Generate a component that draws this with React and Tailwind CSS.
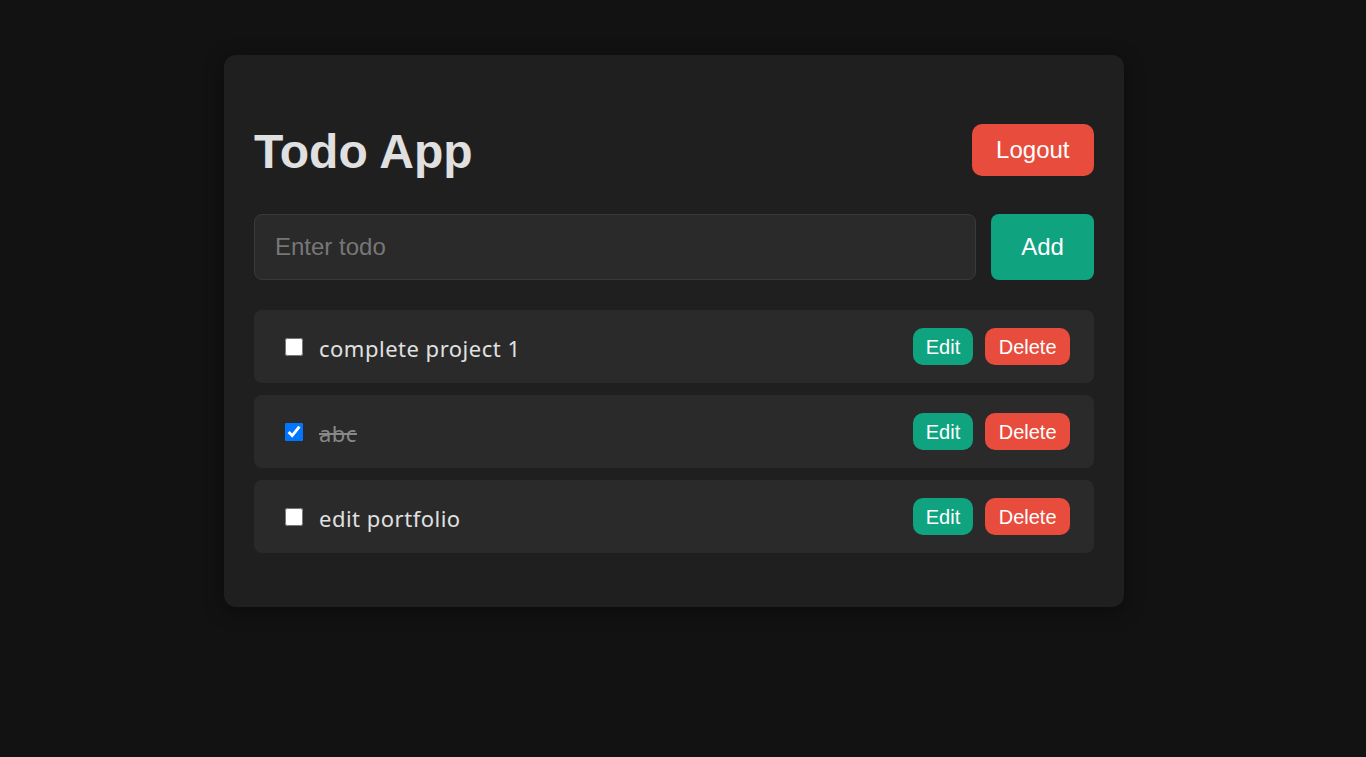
import React, { useState } from "react";

const initialTodos = [
  { id: 1, text: "complete project 1", done: false },
  { id: 2, text: "abc", done: true },
  { id: 3, text: "edit portfolio", done: false },
];

const App = () => {
  const [todos, setTodos] = useState(initialTodos);
  const [input, setInput] = useState("");

  const toggle = (id) =>
    setTodos((prev) => prev.map((t) => (t.id === id ? { ...t, done: !t.done } : t)));

  const addTodo = () => {
    if (!input.trim()) return;
    setTodos((prev) => [...prev, { id: Date.now(), text: input, done: false }]);
    setInput("");
  };

  const removeTodo = (id) => setTodos((prev) => prev.filter((t) => t.id !== id));

  return (
    <div className="min-h-screen w-full bg-[#121212] pt-[55px] font-['Liberation_Sans',Arial,sans-serif]">
      <div className="ml-[224px] w-[900px] rounded-xl bg-[#1f1f1f] px-[30px] pt-[69px] pb-[54px] shadow-[0_4px_20px_rgba(0,0,0,0.4)]">
        {/* Header */}
        <div className="flex items-center justify-between">
          <h1 className="mt-[3px] text-[48px] font-bold leading-none text-[#e0e0e0]">Todo App</h1>
          <button className="h-[52px] rounded-[10px] bg-[#e74c3c] px-[24.5px] text-[24px] text-white">
            Logout
          </button>
        </div>

        {/* Input row */}
        <div className="mt-[38px] flex gap-[15px]">
          <input
            className="h-[66px] flex-1 rounded-lg border border-[#3a3a3a] bg-[#2a2a2a] px-5 text-[24px] text-[#e0e0e0] placeholder-[#777] outline-none"
            placeholder="Enter todo"
            value={input}
            onChange={(e) => setInput(e.target.value)}
          />
          <button
            className="h-[66px] w-[103px] rounded-lg bg-[#10a37f] text-[24px] text-white"
            onClick={addTodo}
          >
            Add
          </button>
        </div>

        {/* Todo list */}
        <ul className="mt-[30px] flex flex-col gap-3">
          {todos.map((todo) => (
            <li
              key={todo.id}
              className="flex h-[73px] items-center justify-between rounded-lg bg-[#2a2a2a] pl-[31px] pr-6"
            >
              <div className="flex items-center gap-4">
                <input
                  type="checkbox"
                  checked={todo.done}
                  onChange={() => toggle(todo.id)}
                  className="h-[18px] w-[18px]"
                />
                <span
                  className={
                    "mt-1 font-['Noto_Sans',sans-serif] text-[22px] tracking-[0.5px] " +
                    (todo.done ? "text-[#888] line-through" : "text-[#e0e0e0]")
                  }
                >
                  {todo.text}
                </span>
              </div>
              <div className="flex gap-3">
                <button className="h-[37px] rounded-[10px] bg-[#10a37f] px-[13px] text-[20px] text-white">
                  Edit
                </button>
                <button
                  className="h-[37px] rounded-[10px] bg-[#e74c3c] px-[13.5px] text-[20px] text-white"
                  onClick={() => removeTodo(todo.id)}
                >
                  Delete
                </button>
              </div>
            </li>
          ))}
        </ul>
      </div>
    </div>
  );
};

export default App;
